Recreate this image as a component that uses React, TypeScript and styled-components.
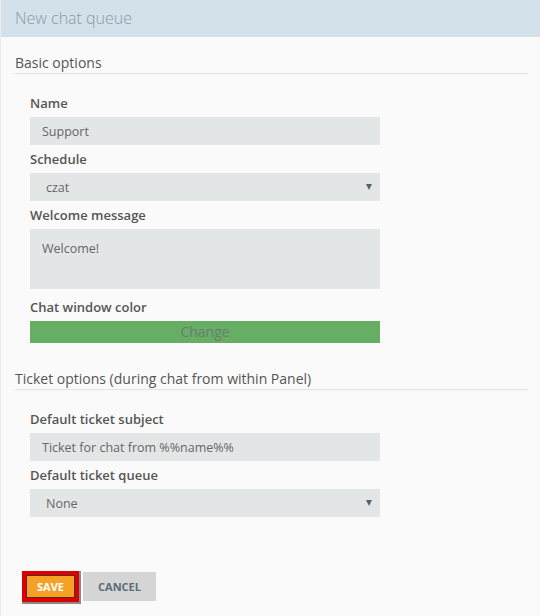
import React from "react";
import styled, { createGlobalStyle } from "styled-components";

const GlobalStyle = createGlobalStyle`
  html, body {
    margin: 0;
    padding: 0;
    background: #fafafa;
  }
  body {
    font-family: "Open Sans", "Liberation Sans", sans-serif;
  }
`;

function App(): React.ReactElement {
    return (
        <Page>
            <GlobalStyle />
            <Header>New chat queue</Header>
            <Body>
                <Legend>Basic options</Legend>
                <Fields>
                    <Label>Name</Label>
                    <Input defaultValue="Support" />
                    <Label>Schedule</Label>
                    <Select>
                        <span>czat</span>
                        <Arrow />
                    </Select>
                    <Label>Welcome message</Label>
                    <TextArea defaultValue="Welcome!" />
                    <Label $top={4}>Chat window color</Label>
                    <ColorButton>Change</ColorButton>
                </Fields>

                <Legend $top={25}>Ticket options (during chat from within Panel)</Legend>
                <Fields>
                    <Label>Default ticket subject</Label>
                    <Input defaultValue="Ticket for chat from %%name%%" />
                    <Label>Default ticket queue</Label>
                    <Select>
                        <span>None</span>
                        <Arrow />
                    </Select>
                </Fields>

                <Actions>
                    <SaveButton>Save</SaveButton>
                    <CancelButton>Cancel</CancelButton>
                </Actions>
            </Body>
        </Page>
    );
}

export default App;

const Page = styled.div`
  width: 540px;
  min-height: 616px;
  background: #fafafa;
  border-left: 1px solid #ececec;
  box-sizing: border-box;
`;

const Header = styled.div`
  height: 37px;
  line-height: 36px;
  padding-left: 14px;
  background: #d3e1eb;
  color: #8a9ba8;
  font-size: 16px;
  font-weight: 300;
`;

const Body = styled.div`
  display: flex;
  flex-direction: column;
  padding: 15px 12px 0 14px;
`;

const Legend = styled.div<{ $top?: number }>`
  margin-top: ${(p) => p.$top ?? 0}px;
  height: 21px;
  line-height: 21px;
  font-size: 14px;
  color: #555;
  border-bottom: 1px solid #e2e2e2;
`;

const Fields = styled.div`
  display: flex;
  flex-direction: column;
  width: 350px;
  padding: 19px 0 0 15px;
`;

const Label = styled.label<{ $top?: number }>`
  margin-top: ${(p) => p.$top ?? 0}px;
  height: 20px;
  line-height: 20px;
  margin-bottom: 4px;
  font-size: 13px;
  font-weight: 600;
  color: #555;
`;

const Input = styled.input`
  height: 28px;
  margin: 0 0 4px;
  padding: 0 12px;
  border: none;
  outline: none;
  background: #e3e6e7;
  color: #666;
  font-family: inherit;
  font-size: 12.5px;
  box-sizing: border-box;
`;

const Select = styled.div`
  display: flex;
  align-items: center;
  justify-content: space-between;
  height: 28px;
  margin-bottom: 4px;
  padding: 0 8px 0 16px;
  background: #e3e6e7;
  color: #666;
  font-size: 12.5px;
  box-sizing: border-box;
`;

const Arrow = styled.span`
  width: 0;
  height: 0;
  border-left: 3.5px solid transparent;
  border-right: 3.5px solid transparent;
  border-top: 6px solid #56636b;
`;

const TextArea = styled.textarea`
  height: 60px;
  margin: 0 0 4px;
  padding: 11px 12px;
  border: none;
  outline: none;
  resize: none;
  background: #e3e6e7;
  color: #666;
  font-family: inherit;
  font-size: 12.5px;
  box-sizing: border-box;
`;

const ColorButton = styled.div`
  height: 22px;
  line-height: 22px;
  text-align: center;
  background: #65ae63;
  color: #6b7d72;
  font-size: 14px;
`;

const Actions = styled.div`
  display: flex;
  align-items: center;
  gap: 7px;
  margin-top: 51px;
  padding-left: 11px;
`;

const SaveButton = styled.button`
  height: 23px;
  width: 49px;
  margin: 0 1px 0 0;
  padding: 0;
  border: 1px solid #5c2a12;
  background: #f5a128;
  color: #fff;
  font-family: inherit;
  font-size: 11px;
  font-weight: 700;
  text-transform: uppercase;
  box-shadow: 0 0 0 4px #dd0000, 1px 1px 0 5px #8a8a8a;
`;

const CancelButton = styled.button`
  height: 29px;
  width: 73px;
  padding: 0;
  border: none;
  background: #d5d5d5;
  color: #5b6b78;
  font-family: inherit;
  font-size: 11px;
  font-weight: 700;
  text-transform: uppercase;
`;
